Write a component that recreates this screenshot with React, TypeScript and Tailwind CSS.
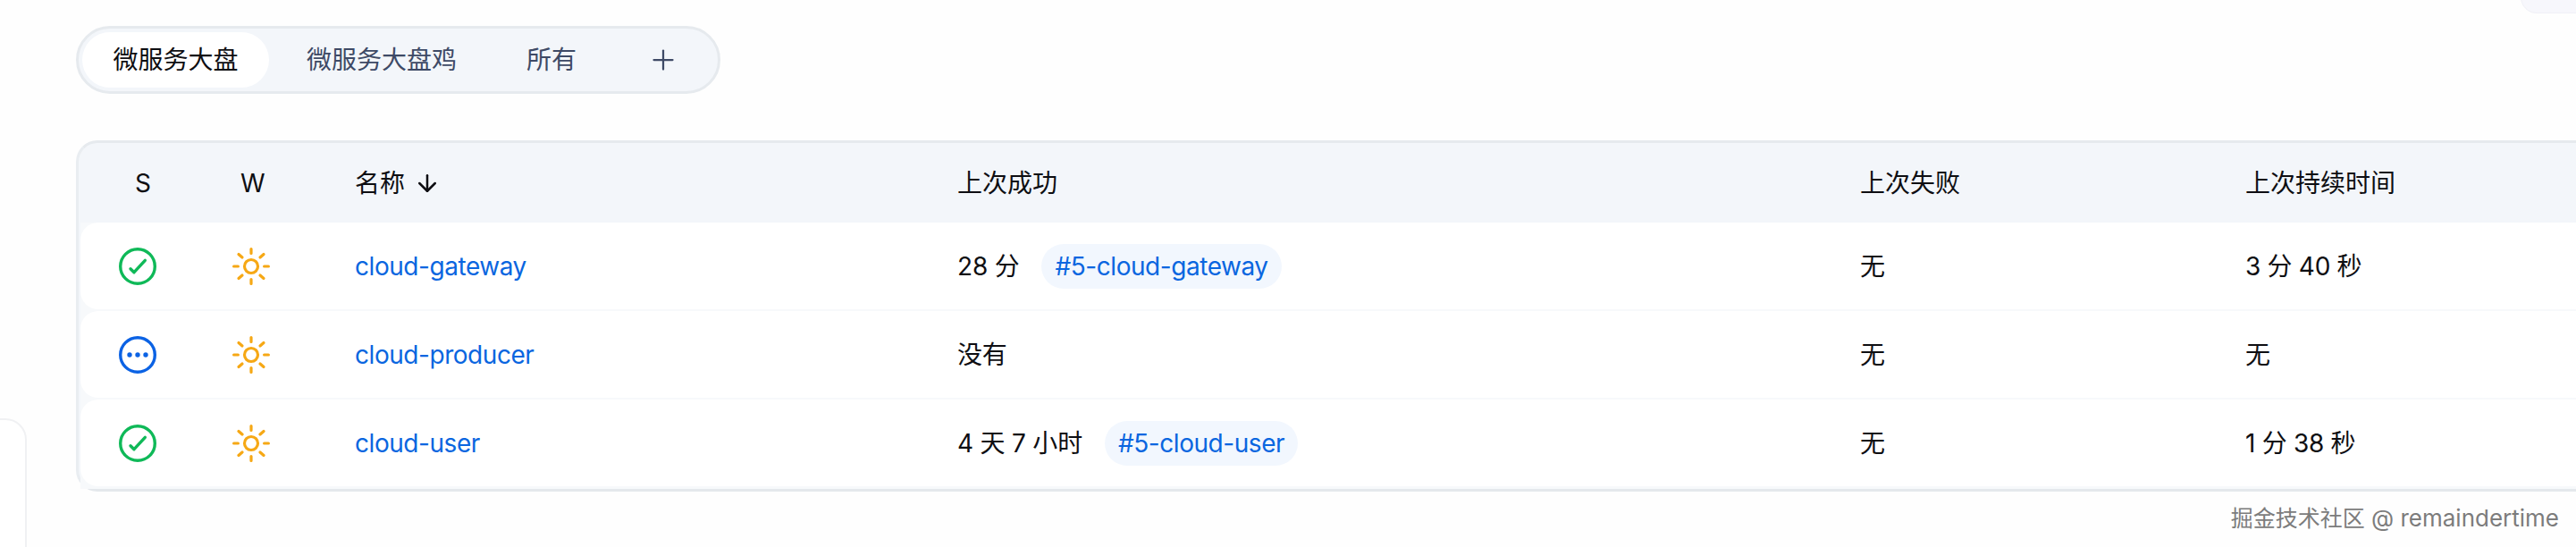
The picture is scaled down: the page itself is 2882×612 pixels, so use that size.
import { ArrowDown, Plus } from 'lucide-react';

const font = "[font-family:Inter,'Noto_Sans_CJK_SC',sans-serif]";
const rowGrid = 'grid grid-cols-[170px_137px_674px_1010px_431px_1fr] items-center';

function SuccessIcon() {
    return (
        <svg width="42" height="42" viewBox="0 0 42 42" fill="none" stroke="#0fb958" strokeWidth="3.4">
            <circle cx="21" cy="21" r="19.3" />
            <path d="M13 23.7 17 27.7 29.3 14.3" strokeLinecap="round" strokeLinejoin="round" />
        </svg>
    );
}

function PendingIcon() {
    return (
        <svg width="42" height="42" viewBox="0 0 42 42" fill="none">
            <circle cx="21" cy="21" r="19.3" stroke="#0b62e4" strokeWidth="3.4" />
            <circle cx="12" cy="21" r="2.7" fill="#0b62e4" />
            <circle cx="21" cy="21" r="2.7" fill="#0b62e4" />
            <circle cx="30" cy="21" r="2.7" fill="#0b62e4" />
        </svg>
    );
}

function SunIcon() {
    return (
        <svg width="42" height="42" viewBox="0 0 42 42" fill="none" stroke="#f6a815" strokeWidth="3.2" strokeLinecap="round">
            <circle cx="21" cy="21" r="7.5" />
            <path d="M21 1.6V6.4M21 35.6V40.4M1.6 21H6.4M35.6 21H40.4M7 7.5 11 11M35 7.5 31 11M7 34.5 11 31M35 34.5 31 31" />
        </svg>
    );
}

const rows = [
    { icon: <SuccessIcon />, name: 'cloud-gateway', success: '28 分', build: '#5-cloud-gateway', duration: '3 分 40 秒' },
    { icon: <PendingIcon />, name: 'cloud-producer', success: '没有', build: '', duration: '无' },
    { icon: <SuccessIcon />, name: 'cloud-user', success: '4 天 7 小时', build: '#5-cloud-user', duration: '1 分 38 秒' },
];

export default function App() {
    return (
        <div className={`relative h-[612px] w-[2882px] overflow-hidden bg-[#fefefe] pl-[85px] pt-[29px] text-[28px] text-[#0e0e12] ${font}`}>
            {/* Panels cut off by the page edges */}
            <div className="absolute right-[-40px] top-[-40px] h-[55px] w-[102px] rounded-[18px] border border-[#f0f0f6] bg-[#f7f7fc]" />
            <div className="absolute bottom-[-40px] left-[-40px] h-[184px] w-[70px] rounded-[24px] border-2 border-[#f0f1f3] bg-white" />

            {/* Tabs */}
            <div className="flex h-[76px] w-[721px] items-center rounded-full border-[3px] border-[#e6eaee] bg-[#f3f6fa] pl-[4px]">
                <div className="flex h-[62px] w-[209px] items-center justify-center rounded-full bg-white">微服务大盘</div>
                <div className="ml-[42px] text-[#3e4a66]">微服务大盘鸡</div>
                <div className="ml-[78px] text-[#3e4a66]">所有</div>
                <Plus size={36} strokeWidth={1.5} className="ml-[79px] text-[#3e4a66]" />
            </div>

            {/* Table */}
            <div className="mt-[52px] w-[2900px] rounded-[24px] border-x-[3px] border-b-[3px] border-t-[3px] border-x-[#e9edf1] border-b-[#e4e8ec] border-t-[#e6eaee] bg-[#f3f6fa] pl-[2px]">
                <div className={`${rowGrid} h-[89px]`}>
                    <div className="pl-[61px]">S</div>
                    <div className="pl-[9px]">W</div>
                    <div className="flex items-center gap-[10px]">
                        名称
                        <ArrowDown size={30} />
                    </div>
                    <div>上次成功</div>
                    <div>上次失败</div>
                    <div>上次持续时间</div>
                </div>
                <div className="flex flex-col gap-[2px] bg-[#f7f9fb] pb-[3px]">
                    {rows.map((row) => (
                        <div key={row.name} className={`${rowGrid} h-[97px] rounded-[20px] bg-white`}>
                            <div className="pl-[43px]">{row.icon}</div>
                            <div>
                                <SunIcon />
                            </div>
                            <a href="#" className="tracking-[-0.45px] text-[#0a66e0]">
                                {row.name}
                            </a>
                            <div className="flex items-center gap-[25px]">
                                <span className="tracking-[-0.2px]">{row.success}</span>
                                {row.build && (
                                    <a href="#" className="flex h-[50px] items-center rounded-full bg-[#f2f7fe] px-[15px] tracking-[-0.45px] text-[#0a66e0]">
                                        {row.build}
                                    </a>
                                )}
                            </div>
                            <div>无</div>
                            <div className="tracking-[-0.3px]">{row.duration}</div>
                        </div>
                    ))}
                </div>
            </div>

            {/* Watermark */}
            <div className="absolute right-[19px] top-[563px] text-[26px] leading-[34px] text-[#7c7c7c] [text-shadow:0_0_2px_#fff]">
                <span className="text-[25px]">掘金技术社区</span> @ remaindertime
            </div>
        </div>
    );
}
